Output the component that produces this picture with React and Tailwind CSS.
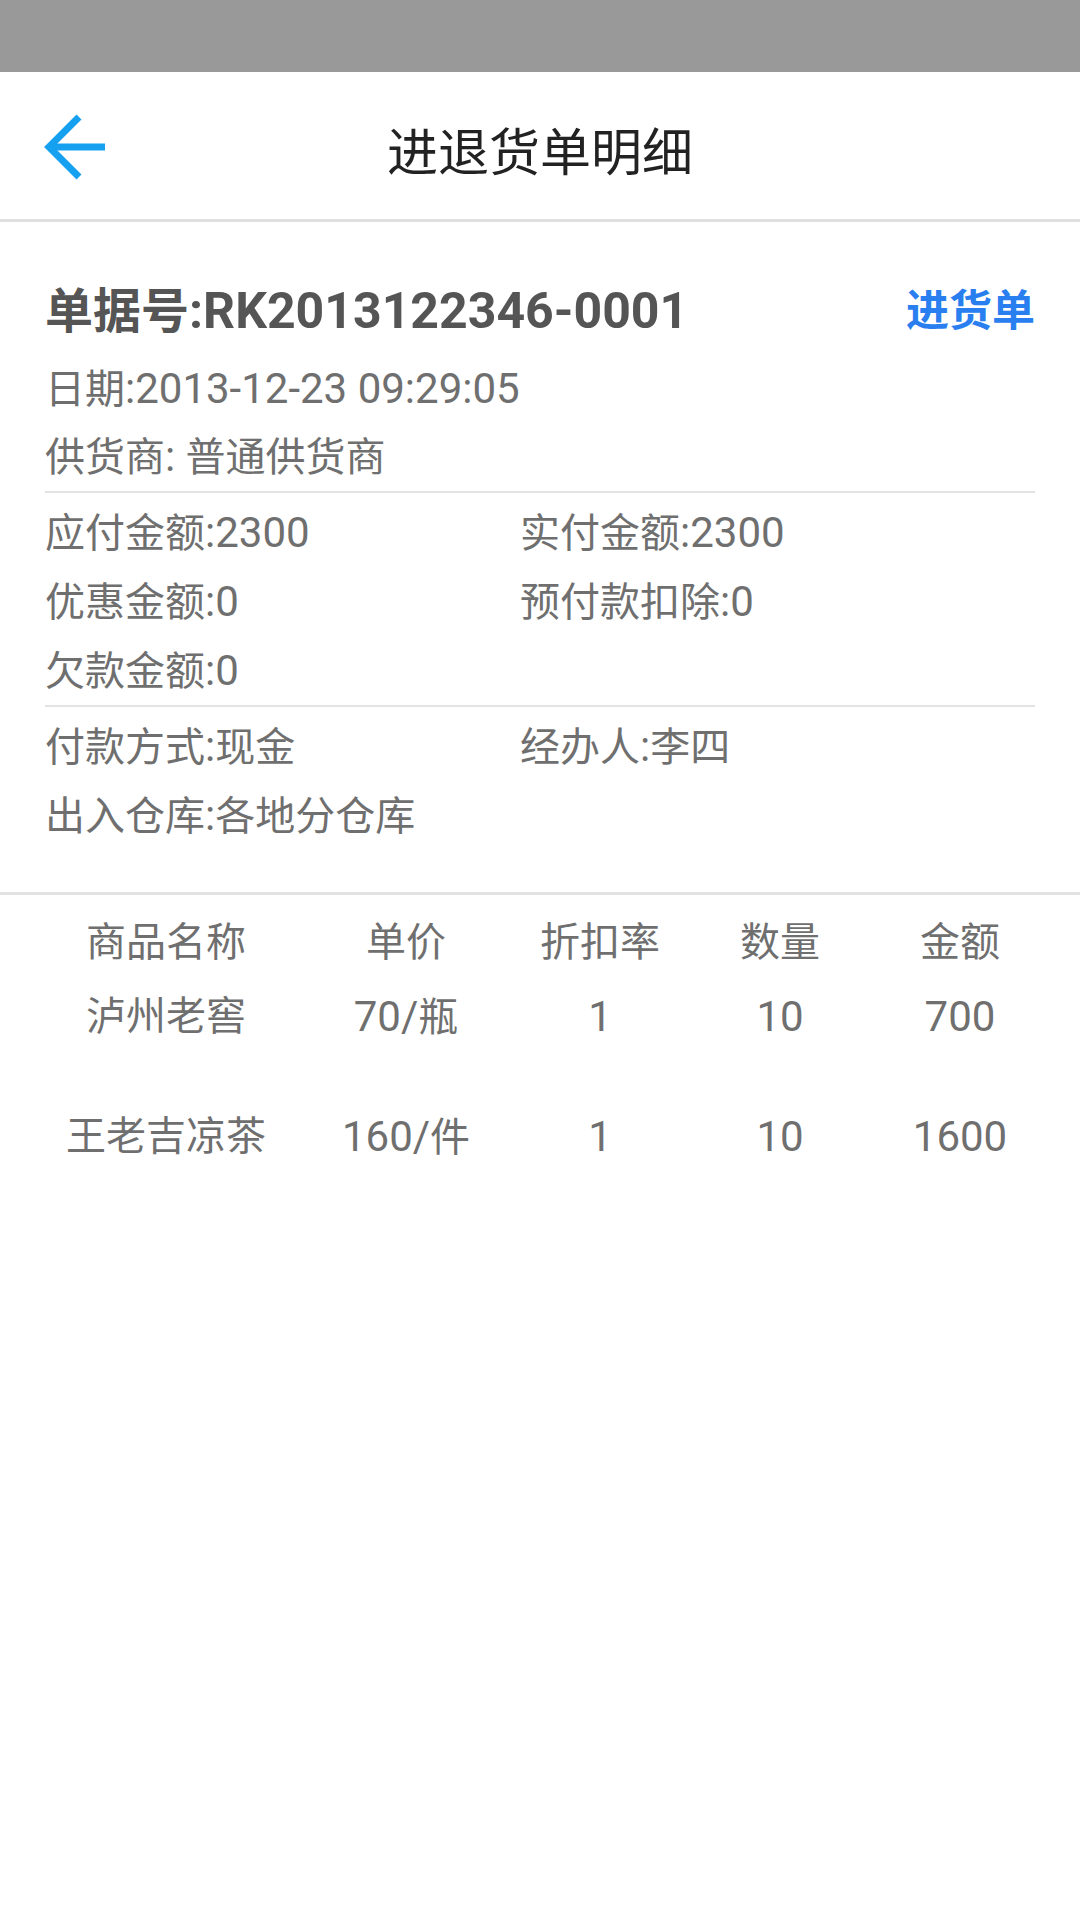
import React from "react";

const font = { fontFamily: "Roboto, 'Noto Sans CJK SC', sans-serif" };
const CJK = /([\u3000-\u9fff\uff00-\uffef]+)/;

function Mixed({ text, bold }) {
  const parts = text.split(CJK).filter((p) => p !== "");
  return (
    <>
      {parts.map((p, i) =>
        CJK.test(p) ? (
          <span key={i} className={bold ? "text-[48px]" : "text-[40px]"}>{p}</span>
        ) : (
          <span key={i} className={bold ? "text-[50px]" : "text-[42px]"}>{p}</span>
        )
      )}
    </>
  );
}

function Row({ left, right }) {
  return (
    <div className="grid grid-cols-[475px_1fr] h-[69px] items-center text-[#6f6f6f]">
      <div className="whitespace-nowrap"><Mixed text={left} /></div>
      <div className="whitespace-nowrap"><Mixed text={right} /></div>
    </div>
  );
}

const items = [
  ["泸州老窖", "70/瓶", "1", "10", "700"],
  ["王老吉凉茶", "160/件", "1", "10", "1600"],
];

export default function App() {
  return (
    <div className="w-[1080px] min-h-[1920px] bg-white" style={font}>
      <div className="h-[72px] bg-[#999999]" />
      <div className="grid grid-cols-[1fr_auto_1fr] h-[147px]">
        <div className="flex items-center pl-[40px]">
          <svg width="70" height="70" viewBox="0 0 70 70" className="mt-[2px]">
            <path d="M39 5 L9 35 L39 65" fill="none" stroke="#15a0f0" strokeWidth="7" strokeLinejoin="miter" />
            <path d="M9 35 H65" fill="none" stroke="#15a0f0" strokeWidth="7" />
          </svg>
        </div>
        <div className="flex items-center pt-[18px] text-[51px] text-[#222222] whitespace-nowrap">进退货单明细</div>
        <div />
      </div>
      <div className="h-[3px] bg-[#e0e0e0]" />

      <div className="px-[45px]">
        <div className="mt-[54px] h-[70px] flex items-center justify-between">
          <div className="mt-[12px] font-bold text-[#555555] whitespace-nowrap leading-[70px]">
            <Mixed text="单据号:RK2013122346-0001" bold />
          </div>
          <div className="text-[43px] font-bold text-[#2a7ff0] whitespace-nowrap">进货单</div>
        </div>
        <div className="h-[84px] flex items-center text-[#6f6f6f] whitespace-nowrap">
          <span><Mixed text="日期:2013-12-23 09:29:05" /></span>
        </div>
        <div className="h-[52px] flex items-center text-[#6f6f6f] whitespace-nowrap">
          <span><Mixed text="供货商: 普通供货商" /></span>
        </div>
        <div className="mt-[9px] h-[2px] bg-[#e3e3e3]" />
        <div className="pt-[5px]">
          <Row left="应付金额:2300" right="实付金额:2300" />
          <Row left="优惠金额:0" right="预付款扣除:0" />
          <Row left="欠款金额:0" right="" />
        </div>
        <div className="h-[2px] bg-[#e3e3e3]" />
        <div className="pt-[5px] pb-[42px]">
          <Row left="付款方式:现金" right="经办人:李四" />
          <Row left="出入仓库:各地分仓库" right="" />
        </div>
      </div>
      <div className="h-[3px] bg-[#e3e3e3]" />

      <div className="px-[30px] pt-[18px] text-[#6f6f6f]">
        <div className="grid grid-cols-[272px_208px_180px_180px_180px] h-[60px] items-center text-center text-[40px]">
          <div>商品名称</div>
          <div>单价</div>
          <div>折扣率</div>
          <div>数量</div>
          <div>金额</div>
        </div>
        <div className="pt-[14px]">
          {items.map((r, i) => (
            <div key={i} className="grid grid-cols-[272px_208px_180px_180px_180px] h-[120px] text-center leading-[60px]">
              {r.map((c, j) => (
                <div key={j} className="whitespace-nowrap"><Mixed text={c} /></div>
              ))}
            </div>
          ))}
        </div>
      </div>
    </div>
  );
}
